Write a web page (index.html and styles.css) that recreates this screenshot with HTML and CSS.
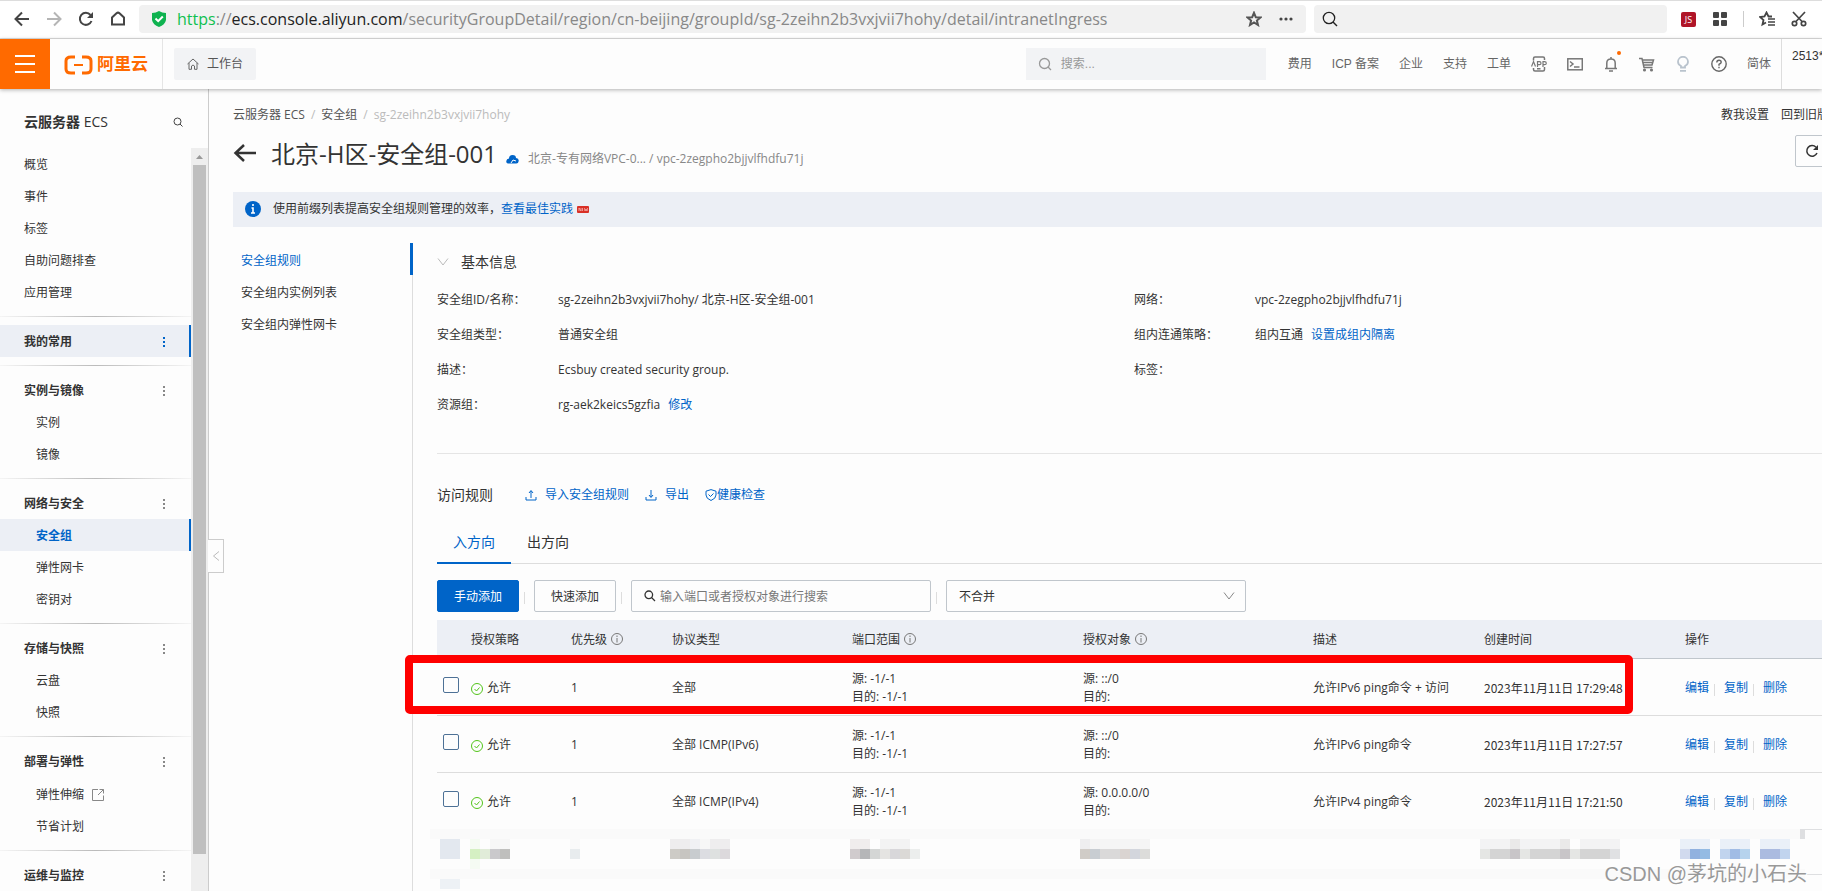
FILE: index.html
```
<!DOCTYPE html>
<html lang="zh-CN">
  <head>
    <meta charset="UTF-8" />
    <meta name="viewport" content="width=device-width, initial-scale=1.0" />
    <title>安全组</title>
    <link rel="stylesheet" href="styles.css">
  </head>
  <body>
    <div class="browser-bar">
      <div class="browser-nav">
        <button type="button" aria-label="后退"><svg width="16" height="16" viewBox="0 0 16 16"><path d="M8 1.500L1.500 8L8 14.500M1.500 8H15" stroke="#444" stroke-width="2" fill="none"/></svg></button>
        <button type="button" aria-label="前进"><svg width="16" height="16" viewBox="0 0 16 16"><path d="M8 1.500L14.500 8L8 14.500M14.500 8H1" stroke="#b5b5b5" stroke-width="2" fill="none"/></svg></button>
        <button type="button" aria-label="刷新"><svg width="16" height="16" viewBox="0 0 16 16"><path d="M13.500 10A6 6 0 1 1 12.500 4" stroke="#444" stroke-width="2" fill="none"/><path d="M15 1V7H9z" fill="#444"/></svg></button>
        <button type="button" aria-label="主页"><svg width="16" height="16" viewBox="0 0 16 16"><path d="M2 13.500V6.500L6.500 2.300Q8 1 9.500 2.300L14 6.500V13.500H15M1 13.500H14" stroke="#444" stroke-width="2" fill="none"/></svg></button>
      </div>
      <div class="address">
        <svg width="16" height="18" viewBox="0 0 16 18"><path d="M8 1Q11 3 15 3V10Q14 15 8 17Q2 15 1 10V3Q5 3 8 1z" fill="#0fb350"/><path d="M4.500 8.500L7.200 11.200L11.800 6.500" stroke="#fff" stroke-width="2" fill="none"/></svg>
        <div class="url"><span class="url-scheme">https</span>://<span class="url-host">ecs.console.aliyun.com</span>/securityGroupDetail/region/cn-beijing/groupId/sg-2zeihn2b3vxjvii7hohy/detail/intranetIngress</div>
        <button type="button" aria-label="收藏"><svg width="16" height="16" viewBox="0 0 16 16"><path d="M8 1.800L9.800 6.200L14.500 6.500L10.900 9.500L12 14L8 11.500L4 14L5.100 9.500L1.500 6.500L6.200 6.200z" stroke="#555" stroke-width="2" fill="none"/></svg></button>
        <button type="button" aria-label="更多"><svg width="16" height="16" viewBox="0 0 16 16" fill="#444"><circle cx="3" cy="8" r="1.600"/><circle cx="8" cy="8" r="1.600"/><circle cx="13" cy="8" r="1.600"/></svg></button>
      </div>
      <label class="browser-search">
        <svg width="16" height="16" viewBox="0 0 16 16"><circle cx="7" cy="7" r="5.700" stroke="#222" stroke-width="1.300" fill="none"/><path d="M11 11L15 15" stroke="#222" stroke-width="1.500"/></svg>
        <input type="text" aria-label="网页搜索">
      </label>
      <div class="browser-tools">
        <span class="js-badge">JS</span>
        <svg width="16" height="16" viewBox="0 0 16 16" fill="#444"><rect x="1" y="1" width="6" height="6" rx="1"/><rect x="9" y="1" width="6" height="6" rx="1"/><rect x="1" y="9" width="6" height="6" rx="1"/><rect x="9" y="9" width="6" height="6" rx="1"/></svg>
        <span class="tool-line"></span>
        <svg width="16" height="16" viewBox="0 0 16 16" fill="none" stroke="#444"><path d="M13 5.500L9.500 5.500L7.500 1.500L5.500 5.500L1 6L4.500 9L3.500 13.500L7 11.500" stroke-width="1.800"/><path d="M9 8H16M9 11H16M9 14H16" stroke-width="1.600"/></svg>
        <svg width="16" height="16" viewBox="0 0 16 16" fill="none" stroke="#444" stroke-width="1.700"><path d="M2 1L11 10.500M14 1L5 10.500"/><circle cx="3.500" cy="12.500" r="2.200"/><circle cx="12.500" cy="12.500" r="2.200"/></svg>
      </div>
    </div>

    <header class="topbar">
      <button type="button" class="menu-btn" aria-label="菜单"><svg width="20" height="20" viewBox="0 0 20 20"><path d="M0 2H20M0 10H20M0 18H20" stroke="#fff" stroke-width="2"/></svg></button>
      <a href="#" class="logo">
        <svg width="29" height="20" viewBox="0 0 29 20" fill="none" stroke="#ff6a00"><path d="M11 2H7Q2 2 2 6V14Q2 18 7 18H11M18 2H22Q27 2 27 6V14Q27 18 22 18H18" stroke-width="3"/><path d="M10 10H19" stroke-width="2"/></svg>
        <span>阿里云</span>
      </a>
      <a href="#" class="workbench">
        <svg width="12" height="12" viewBox="0 0 12 12" fill="none" stroke="#666"><path d="M0.500 6L6 1L11.500 6M2 5V11.300H4.500V8Q6 6 7.500 8V11.300H10V5"/></svg>
        工作台
      </a>
      <label class="top-search">
        <svg width="14" height="14" viewBox="0 0 14 14" fill="none" stroke="#999" stroke-width="1.300"><circle cx="6.500" cy="6.500" r="5"/><path d="M10 10L13 13"/></svg>
        <input type="text" placeholder="搜索..." aria-label="搜索">
      </label>
      <nav class="top-nav">
        <a href="#">费用</a>
        <a href="#">ICP 备案</a>
        <a href="#">企业</a>
        <a href="#">支持</a>
        <a href="#">工单</a>
        <a href="#" aria-label="App"><svg width="16" height="16" viewBox="0 0 16 16" fill="none" stroke="#777" stroke-width="1.500"><path d="M2.500 4.500V2.500Q2.500 1 4 1H12Q13.500 1 13.500 2.500V4M2.500 12V13.500Q2.500 15 4 15H12Q13.500 15 13.500 13.500V11M6 12.800H9.500"/><path d="M0.500 10.500L2.500 5.500L4.500 10.500M6.500 11V5.700H8.500Q10 5.700 10 7.200T8.500 8.700H6.500M12 11V5.700H13.500Q15.300 5.700 15.300 7.200T13.500 8.700H12" stroke-width="1.200"/></svg></a>
        <a href="#" aria-label="终端"><svg width="16" height="16" viewBox="0 0 16 16" fill="none" stroke="#777" stroke-width="1.500"><rect x="0.800" y="2.800" width="14.500" height="11"/><path d="M3 5.500L6 8L3 10.500M7 11H12.500"/></svg></a>
        <a href="#" class="bell" aria-label="消息"><svg width="16" height="16" viewBox="0 0 16 16" fill="none" stroke="#777" stroke-width="1.500"><path d="M2 12.500H14M3.800 12V7Q3.800 3 8 3T12.200 7V12M8 1V3M6 15H10"/></svg><i></i></a>
        <a href="#" aria-label="购物车"><svg width="16" height="16" viewBox="0 0 16 16" fill="none" stroke="#777" stroke-width="1.500"><path d="M0 2.500H3L5 11.500H13.500M3.500 4H14.500L13 9H4.500M4.500 6.500H13.500"/><circle cx="5.500" cy="14" r="0.800"/><circle cx="12.500" cy="14" r="0.800"/></svg></a>
        <a href="#" aria-label="提示"><svg width="16" height="16" viewBox="0 0 16 16" fill="none" stroke="#b9c3cd" stroke-width="1.800"><path d="M6 11.500V10Q3 8.500 3 5.800A5 5 0 0 1 13 5.800Q13 8.500 10 10V11.500zM5 14.800H11"/></svg></a>
        <a href="#" aria-label="帮助"><svg width="16" height="16" viewBox="0 0 16 16" fill="none" stroke="#666" stroke-width="1.400"><circle cx="8" cy="8" r="7.200"/><path d="M5.800 6.500Q5.800 4.300 8 4.300T10.200 6.300Q10.200 7.300 8 8.300V9.700M8 10.800V12.300"/></svg></a>
        <a href="#">简体</a>
      </nav>
      <div class="account">2513*</div>
    </header>

    <div class="layout">
      <aside class="sidebar">
        <div class="sidebar-title">
          <span><strong>云服务器</strong> ECS</span>
          <svg width="10" height="10" viewBox="0 0 10 10" fill="none" stroke="#444"><circle cx="4.500" cy="4.500" r="3.500"/><path d="M7 7L9.500 9.500"/></svg>
        </div>
        <div class="sidebar-body">
          <nav class="menu">
            <a href="#">概览</a>
            <a href="#">事件</a>
            <a href="#">标签</a>
            <a href="#">自助问题排查</a>
            <a href="#">应用管理</a>
            <hr>
            <a href="#" class="group active">我的常用<i class="dots"></i></a>
            <hr>
            <a href="#" class="group">实例与镜像<i class="dots"></i></a>
            <a href="#" class="sub">实例</a>
            <a href="#" class="sub">镜像</a>
            <hr>
            <a href="#" class="group">网络与安全<i class="dots"></i></a>
            <a href="#" class="sub active current">安全组</a>
            <a href="#" class="sub">弹性网卡</a>
            <a href="#" class="sub">密钥对</a>
            <hr>
            <a href="#" class="group">存储与快照<i class="dots"></i></a>
            <a href="#" class="sub">云盘</a>
            <a href="#" class="sub">快照</a>
            <hr>
            <a href="#" class="group">部署与弹性<i class="dots"></i></a>
            <a href="#" class="sub external">弹性伸缩<svg width="12" height="12" viewBox="0 0 12 12" fill="none" stroke="#888"><path d="M6 0.500H0.500V11.500H11.500V6.500M7.500 0.500H11.500V4.500M11.500 0.500L6 6"/></svg></a>
            <a href="#" class="sub">节省计划</a>
            <hr>
            <a href="#" class="group">运维与监控<i class="dots"></i></a>
          </nav>
          <div class="scrollbar">
            <svg width="17" height="17" viewBox="0 0 17 17"><path d="M5 11L8.500 7L12 11z" fill="#999"/></svg>
            <div class="thumb"></div>
          </div>
        </div>
        <button type="button" class="collapse" aria-label="收起"><svg width="8" height="12" viewBox="0 0 8 12"><path d="M7 1.500L1.500 6L7 10.500" stroke="#bbb" fill="none"/></svg></button>
      </aside>

      <main class="main">
        <div class="crumb-row">
          <div class="crumbs"><a href="#">云服务器 ECS</a><i>/</i><a href="#">安全组</a><i>/</i><span>sg-2zeihn2b3vxjvii7hohy</span></div>
          <div class="crumb-links"><a href="#">教我设置</a><a href="#">回到旧版</a></div>
        </div>
        <div class="title-row">
          <a href="#" class="back" aria-label="返回"><svg width="24" height="20" viewBox="0 0 24 20"><path d="M11 2L2.500 10L11 18M2.500 10H23" stroke="#333" stroke-width="2.500" fill="none"/></svg></a>
          <h1>北京-H区-安全组-001</h1>
          <svg width="13" height="10" viewBox="0 0 13 10"><path d="M3 9.500Q0 9.500 0.300 7T3 4.500Q3 1 6.500 1T10 4Q13 4.300 12.700 7T10 9.500z" fill="#0064c8"/><path d="M5 9L7 6L10 7" stroke="#fff" fill="none"/></svg>
          <span class="vpc">北京-专有网络VPC-0... / vpc-2zegpho2bjjvlfhdfu71j</span>
          <button type="button" class="refresh" aria-label="刷新"><svg width="14" height="14" viewBox="0 0 14 14"><path d="M12 9A5.300 5.300 0 1 1 11 3.300" stroke="#333" stroke-width="1.500" fill="none"/><path d="M13 1V6H8z" fill="#333"/></svg></button>
        </div>
        <div class="notice">
          <svg width="16" height="16" viewBox="0 0 16 16"><circle cx="8" cy="8" r="8" fill="#0064c8"/><path d="M8 3V5M6.500 7H8V12M6 12H10" stroke="#fff" stroke-width="1.600" fill="none"/></svg>
          <span>使用前缀列表提高安全组规则管理的效率，<a href="#">查看最佳实践</a></span>
          <svg width="12" height="7" viewBox="0 0 12 7"><rect width="12" height="7" rx="1" fill="#d93026"/><path d="M2 5V2L4 5V2M5.500 2V5M7.500 2L8 5L9 3L10 5L10.500 2" stroke="#f6c6c2" stroke-width="0.700" fill="none"/></svg>
        </div>

        <div class="detail">
          <nav class="subnav">
            <a href="#" class="selected">安全组规则</a>
            <a href="#">安全组内实例列表</a>
            <a href="#">安全组内弹性网卡</a>
          </nav>
          <section class="panel">
            <h2 class="info-title"><svg width="12" height="12" viewBox="0 0 12 12"><path d="M1 2.500L6 9L11 2.500" stroke="#bbb" fill="none"/></svg>基本信息</h2>
            <dl class="info">
              <div><dt>安全组ID/名称：</dt><dd>sg-2zeihn2b3vxjvii7hohy/ 北京-H区-安全组-001</dd></div>
              <div><dt>网络：</dt><dd>vpc-2zegpho2bjjvlfhdfu71j</dd></div>
              <div><dt>安全组类型：</dt><dd>普通安全组</dd></div>
              <div><dt>组内连通策略：</dt><dd>组内互通<a href="#">设置成组内隔离</a></dd></div>
              <div><dt>描述：</dt><dd>Ecsbuy created security group.</dd></div>
              <div><dt>标签：</dt><dd></dd></div>
              <div><dt>资源组：</dt><dd>rg-aek2keics5gzfia<a href="#">修改</a></dd></div>
            </dl>

            <div class="rules-head">
              <h2>访问规则</h2>
              <a href="#"><svg width="12" height="12" viewBox="0 0 12 12" fill="none" stroke="#0064c8"><path d="M1 8V11H11V8M6 9V2M4 4L6 1.500L8 4"/></svg>导入安全组规则</a>
              <a href="#"><svg width="12" height="12" viewBox="0 0 12 12" fill="none" stroke="#0064c8"><path d="M1 8V11H11V8M6 1V8M4 6L6 8.500L8 6"/></svg>导出</a>
              <a href="#" class="health"><svg width="12" height="12" viewBox="0 0 12 12" fill="none" stroke="#0064c8"><path d="M6 0.600L11 2.200V6Q11 9.500 6 11.500Q1 9.500 1 6V2.200zM3.500 5.500L5.500 7.500L8.500 4.500"/></svg>健康检查</a>
            </div>

            <div class="tabs" role="tablist">
              <button type="button" role="tab" class="on">入方向</button>
              <button type="button" role="tab">出方向</button>
            </div>

            <div class="toolbar">
              <button type="button" class="btn primary">手动添加</button>
              <i></i>
              <button type="button" class="btn">快速添加</button>
              <i></i>
              <label class="rule-search">
                <svg width="12" height="12" viewBox="0 0 12 12" fill="none" stroke="#333" stroke-width="1.300"><circle cx="4.800" cy="4.800" r="3.800"/><path d="M7.500 7.500L11 11"/></svg>
                <input type="text" placeholder="输入端口或者授权对象进行搜索" aria-label="搜索规则">
              </label>
              <i></i>
              <div class="select-box">
                <select aria-label="合并方式"><option>不合并</option></select>
                <svg width="12" height="12" viewBox="0 0 12 12"><path d="M1 2.500L6 9L11 2.500" stroke="#888" fill="none"/></svg>
              </div>
            </div>

            <div class="rules">
              <table class="rules-table">
                <colgroup>
                  <col class="c-check"><col class="c-policy"><col class="c-priority"><col class="c-proto"><col class="c-port"><col class="c-target"><col class="c-desc"><col class="c-time"><col>
                </colgroup>
                <thead>
                  <tr>
                    <th></th>
                    <th>授权策略</th>
                    <th>优先级<svg class="tip" width="12" height="12" viewBox="0 0 12 12"><circle cx="6" cy="6" r="5.500" fill="none" stroke="#777"/><path d="M6 2.500V4M6 5V9.500" stroke="#777"/></svg></th>
                    <th>协议类型</th>
                    <th>端口范围<svg class="tip" width="12" height="12" viewBox="0 0 12 12"><circle cx="6" cy="6" r="5.500" fill="none" stroke="#777"/><path d="M6 2.500V4M6 5V9.500" stroke="#777"/></svg></th>
                    <th>授权对象<svg class="tip" width="12" height="12" viewBox="0 0 12 12"><circle cx="6" cy="6" r="5.500" fill="none" stroke="#777"/><path d="M6 2.500V4M6 5V9.500" stroke="#777"/></svg></th>
                    <th>描述</th>
                    <th>创建时间</th>
                    <th>操作</th>
                  </tr>
                </thead>
                <tbody>
                  <tr>
                    <td><input type="checkbox" aria-label="选择规则 1"></td>
                    <td><svg class="ok" width="12" height="12" viewBox="0 0 12 12" fill="none" stroke="#52c41a"><circle cx="6" cy="6" r="5.500"/><path d="M3.500 6L5.500 8L8.500 4.500"/></svg>允许</td>
                    <td>1</td>
                    <td>全部</td>
                    <td>源: -1/-1<br>目的: -1/-1</td>
                    <td>源: ::/0<br>目的:</td>
                    <td>允许IPv6 ping命令 + 访问</td>
                    <td class="time">2023年11月11日 17:29:48</td>
                    <td class="ops"><a href="#">编辑</a><a href="#">复制</a><a href="#">删除</a></td>
                  </tr>
                  <tr>
                    <td><input type="checkbox" aria-label="选择规则 2"></td>
                    <td><svg class="ok" width="12" height="12" viewBox="0 0 12 12" fill="none" stroke="#52c41a"><circle cx="6" cy="6" r="5.500"/><path d="M3.500 6L5.500 8L8.500 4.500"/></svg>允许</td>
                    <td>1</td>
                    <td>全部 ICMP(IPv6)</td>
                    <td>源: -1/-1<br>目的: -1/-1</td>
                    <td>源: ::/0<br>目的:</td>
                    <td>允许IPv6 ping命令</td>
                    <td class="time">2023年11月11日 17:27:57</td>
                    <td class="ops"><a href="#">编辑</a><a href="#">复制</a><a href="#">删除</a></td>
                  </tr>
                  <tr>
                    <td><input type="checkbox" aria-label="选择规则 3"></td>
                    <td><svg class="ok" width="12" height="12" viewBox="0 0 12 12" fill="none" stroke="#52c41a"><circle cx="6" cy="6" r="5.500"/><path d="M3.500 6L5.500 8L8.500 4.500"/></svg>允许</td>
                    <td>1</td>
                    <td>全部 ICMP(IPv4)</td>
                    <td>源: -1/-1<br>目的: -1/-1</td>
                    <td>源: 0.0.0.0/0<br>目的:</td>
                    <td>允许IPv4 ping命令</td>
                    <td class="time">2023年11月11日 17:21:50</td>
                    <td class="ops"><a href="#">编辑</a><a href="#">复制</a><a href="#">删除</a></td>
                  </tr>
                </tbody>
              </table>
              <!-- masked rows -->
              <svg class="mosaic" width="1400" height="62" viewBox="0 0 1400 62" shape-rendering="crispEdges">
                <path d="M0 0H1370V10H0zM0 40H1375V50H0z" fill="#fafafa"/>
                <path d="M1370 0H1375V10H1370zM1375 0H1400V1H1375zM1375 45H1400V46H1375z" fill="#dedfe1"/>
                <path d="M10 10H20V30H10zM20 10H30V30H20z" fill="#e3e8ef"/>
                <path d="M10 50H30V60H10z" fill="#edf1f5"/>
                <path d="M40 10H50V20H40zM40 30H50V40H40z" fill="#f5fbf3"/><path d="M40 20H50V30H40z" fill="#d5f0c3"/><path d="M50 20H60V30H50z" fill="#e1ecd9"/>
                <path d="M60 10H80V20H60z" fill="#f7f7f7"/><path d="M60 20H70V30H60z" fill="#cac9cc"/><path d="M70 20H80V30H70z" fill="#bfbfbd"/>
                <path d="M140 10H150V20H140z" fill="#fafafa"/><path d="M140 20H150V30H140z" fill="#e8ecee"/>
                <path d="M240 10H260V20H240zM280 10H300V20H280z" fill="#eeedee"/><path d="M260 10H270V20H260z" fill="#f0f1f4"/><path d="M270 10H280V20H270z" fill="#f7f7f7"/>
                <path d="M240 20H250V30H240z" fill="#cdcbc6"/><path d="M250 20H260V30H250z" fill="#c7c5c1"/><path d="M260 20H270V30H260z" fill="#c8cccf"/><path d="M270 20H280V30H270z" fill="#dcdde2"/><path d="M280 20H290V30H280z" fill="#dee1e0"/><path d="M290 20H300V30H290z" fill="#dcd9dc"/>
                <path d="M420 10H440V20H420z" fill="#f0eded"/><path d="M450 10H480V20H450z" fill="#f3f3f3"/>
                <path d="M420 20H430V30H420z" fill="#d0cbcd"/><path d="M430 20H440V30H430z" fill="#b5b6b8"/><path d="M440 20H450V30H440z" fill="#d4d6d5"/><path d="M450 20H460V30H450z" fill="#e5e4e2"/><path d="M460 20H470V30H460z" fill="#d8d7da"/><path d="M470 20H480V30H470z" fill="#dbd9d6"/><path d="M480 20H490V30H480z" fill="#eceeed"/>
                <path d="M650 10H660V20H650z" fill="#eeeeef"/><path d="M660 10H720V20H660z" fill="#f5f5f5"/>
                <path d="M650 20H660V30H650z" fill="#d0ccc7"/><path d="M660 20H670V30H660z" fill="#c8cdd2"/><path d="M670 20H690V30H670z" fill="#dad9d9"/><path d="M690 20H700V30H690z" fill="#dad4d1"/><path d="M700 20H710V30H700z" fill="#d3d6dd"/><path d="M710 20H720V30H710z" fill="#dcdcda"/>
                <path d="M1050 10H1080V20H1050zM1090 10H1130V20H1090zM1150 10H1190V20H1150z" fill="#f3f3f4"/><path d="M1080 10H1090V20H1080zM1130 10H1140V20H1130z" fill="#eae9e9"/>
                <path d="M1050 20H1060V30H1050zM1090 20H1100V30H1090zM1140 20H1150V30H1140z" fill="#e5e6e4"/><path d="M1060 20H1080V30H1060zM1100 20H1130V30H1100zM1150 20H1180V30H1150z" fill="#d4d4d4"/><path d="M1080 20H1090V30H1080zM1130 20H1140V30H1130z" fill="#c8c5c8"/><path d="M1180 20H1190V30H1180z" fill="#e0e1e3"/>
                <path d="M1250 10H1280V20H1250zM1290 10H1320V20H1290zM1330 10H1360V20H1330z" fill="#eaf0f8"/>
                <path d="M1250 20H1260V30H1250z" fill="#d1daee"/><path d="M1260 20H1270V30H1260z" fill="#91b1df"/><path d="M1270 20H1280V30H1270z" fill="#94bbe3"/>
                <path d="M1290 20H1300V30H1290zM1350 20H1360V30H1350z" fill="#c1d4ee"/><path d="M1300 20H1310V30H1300z" fill="#a1bce5"/><path d="M1310 20H1320V30H1310z" fill="#b6d3ed"/><path d="M1330 20H1350V30H1330z" fill="#abbbe0"/>
              </svg>
              <div class="highlight"></div>
            </div>
          </section>
        </div>
      </main>
    </div>
    <div class="watermark">CSDN @茅坑的小石头</div>
  </body>
</html>
```
FILE: styles.css
```
* {
  box-sizing: border-box;
}

body {
  display: flex;
  flex-direction: column;
  height: 100vh;
  margin: 0;
  overflow: hidden;
  background-color: #fdfdfd;
  color: #333;
  font: 12px/18px "Open Sans", "Noto Sans CJK SC", sans-serif;
}

a {
  color: #0064c8;
  text-decoration: none;
}

button,
input,
select {
  padding: 0;
  border: 0;
  outline: 0;
  background: none;
  color: inherit;
  font: inherit;
}

svg {
  flex: none;
  display: block;
}

h1,
h2,
dl,
dd {
  margin: 0;
  font-weight: normal;
}

h2 {
  font-size: 14px;
}

/* browser */
.browser-bar {
  display: flex;
  align-items: center;
  height: 39px;
  padding: 0 15px 1px 14px;
  border-top: 1px solid #ddd;
  border-bottom: 1px solid #ddd;
  background-color: #fff;
}

.browser-nav {
  display: flex;
  gap: 16px;
  margin-right: 13px;
}

.address {
  display: flex;
  flex: 1;
  align-items: center;
  gap: 16px;
  height: 28px;
  padding: 0 12px;
  border-radius: 4px;
  background-color: #f1f1f1;
}

.url {
  flex: 1;
  margin-left: -6px;
  overflow: hidden;
  color: #888;
  font-size: 16px;
  line-height: 24px;
  white-space: nowrap;
}

.url-scheme {
  color: #0fc04f;
}

.url-host {
  color: #222;
}

.browser-search {
  display: flex;
  align-items: center;
  width: 353px;
  height: 28px;
  margin-left: 8px;
  padding-left: 8px;
  border-radius: 4px;
  background-color: #f1f1f1;
}

.browser-tools {
  display: flex;
  align-items: center;
  gap: 16px;
  margin-left: 14px;
}

.js-badge {
  width: 15px;
  border-radius: 2px;
  background-color: #b01528;
  color: #fff;
  font-size: 9px;
  line-height: 15px;
  text-align: center;
}

.tool-line {
  width: 1px;
  height: 16px;
  margin: 0 -1px;
  background-color: #ccc;
}

/* console header */
.topbar {
  position: relative;
  z-index: 2;
  display: flex;
  align-items: center;
  height: 50px;
  box-shadow: 0 1px 4px rgba(0, 0, 0, 0.3);
  background-color: #fdfdfd;
  font-family: "Liberation Sans", "Noto Sans CJK SC", sans-serif;
}

.menu-btn {
  display: flex;
  align-items: center;
  justify-content: center;
  width: 50px;
  height: 50px;
  background-color: #ff6a00;
}

.logo {
  display: flex;
  align-items: center;
  gap: 4px;
  height: 50px;
  padding: 2px 14px 0 14px;
  border-right: 1px solid #e5e5e5;
  color: #ff6a00;
  font-size: 17px;
  font-weight: bold;
}

.workbench {
  display: flex;
  align-items: center;
  gap: 8px;
  height: 32px;
  margin-left: 11px;
  padding: 0 13px;
  border-radius: 2px;
  background-color: #f2f3f5;
  color: #555;
}

.top-search {
  display: flex;
  align-items: center;
  gap: 9px;
  width: 240px;
  height: 32px;
  margin-left: auto;
  padding: 0 12px;
  background-color: #f2f3f5;
}

.top-search input,
.rule-search input {
  flex: 1;
  min-width: 0;
}

.top-search input::placeholder {
  color: #999;
}

.top-nav {
  display: flex;
  align-items: center;
  gap: 20px;
  padding: 0 10px 0 22px;
}

.top-nav a {
  color: #666;
}

.bell {
  position: relative;
}

.bell i {
  position: absolute;
  top: -5px;
  right: -2px;
  width: 4px;
  height: 4px;
  border-radius: 50%;
  background-color: #ff6a00;
}

.account {
  width: 41px;
  height: 50px;
  padding: 8px 0 0 10px;
  overflow: hidden;
  border-left: 1px solid #ddd;
}

/* sidebar */
.layout {
  display: flex;
  flex: 1;
  min-height: 0;
}

.sidebar {
  position: relative;
  z-index: 1;
  display: flex;
  flex: none;
  flex-direction: column;
  width: 209px;
  border-right: 1px solid #ccc;
}

.sidebar-title {
  display: flex;
  align-items: center;
  justify-content: space-between;
  flex: none;
  height: 59px;
  padding: 7px 25px 0 24px;
  font-size: 14px;
}

.sidebar-body {
  display: flex;
  flex: 1;
  min-height: 0;
}

.menu {
  flex: 1;
  overflow: hidden;
}

.menu a {
  display: flex;
  align-items: center;
  height: 32px;
  padding: 2px 0 0 24px;
  color: #333;
}

.menu a.sub {
  padding-left: 36px;
}

.menu a.external {
  height: 33px;
}

.menu a.sub svg {
  margin-left: 8px;
}

.menu a.group {
  justify-content: space-between;
  padding-right: 26px;
  font-weight: bold;
}

.menu a.active {
  border-right: 2px solid #0064c8;
  background-color: #eceff5;
}

.menu a.group.active {
  padding-right: 24px;
}

.menu a.current {
  color: #0064c8;
  font-weight: bold;
}

.menu hr {
  height: 1px;
  margin: 8px 0;
  border: 0;
  background: linear-gradient(90deg, #f5f5f5, #bbb, #f5f5f5);
}

.dots {
  width: 2px;
  height: 10px;
  background: repeating-linear-gradient(#888 0 2px, transparent 2px 4px);
}

.active .dots {
  background: repeating-linear-gradient(#0064c8 0 2px, transparent 2px 4px);
}

.scrollbar {
  display: flex;
  flex-direction: column;
  width: 17px;
  padding-bottom: 37px;
  background-color: #eee;
}

.thumb {
  flex: 1;
  margin: 0 2px;
  background-color: #bfbfbf;
}

.collapse {
  position: absolute;
  top: 450px;
  left: 208px;
  display: flex;
  align-items: center;
  justify-content: center;
  width: 16px;
  height: 34px;
  border: 1px solid #ccc;
  border-left: 0;
  background-color: #fdfdfd;
}

/* content */
.main {
  display: flex;
  flex: 1;
  flex-direction: column;
  min-width: 0;
  padding: 17px 0 0 24px;
  overflow: hidden;
}

.crumb-row {
  display: flex;
  justify-content: space-between;
}

.crumbs {
  color: #bbb;
}

.crumbs a {
  color: #555;
}

.crumbs i {
  margin: 0 6px;
  font-style: normal;
}

.crumb-links {
  display: flex;
  gap: 12px;
  margin-right: -7px;
}

.crumb-links a {
  color: #333;
}

.title-row {
  display: flex;
  align-items: center;
  gap: 9px;
  height: 36px;
  margin: 11px 0 21px;
}

.title-row h1 {
  margin-left: 5px;
  padding-top: 2px;
  font-size: 24px;
  line-height: 32px;
}

.title-row .vpc {
  color: #888;
}

.title-row > svg,
.title-row > .vpc {
  margin-top: 12px;
}

.refresh {
  display: flex;
  align-items: center;
  align-self: flex-start;
  flex: none;
  width: 34px;
  height: 32px;
  margin: 0 -7px 0 auto;
  padding-left: 9px;
  border: 1px solid #c0c6cc;
  border-radius: 2px;
}

.notice {
  display: flex;
  align-items: center;
  flex: none;
  height: 35px;
  padding-left: 12px;
  background-color: #eceff5;
}

.notice span {
  margin: 0 4px 0 12px;
}

.detail {
  display: flex;
  flex: 1;
  margin-top: 16px;
}

.subnav {
  flex: none;
  width: 180px;
  border-right: 1px solid #ddd;
}

.subnav a {
  display: block;
  height: 32px;
  margin-right: -1px;
  padding-left: 8px;
  color: #333;
  line-height: 35px;
}

.subnav a.selected {
  border-right: 3px solid #0064c8;
  color: #0064c8;
}

.panel {
  flex: 1;
  min-width: 0;
  padding-left: 24px;
}

.info-title {
  display: flex;
  align-items: center;
  gap: 12px;
  height: 39px;
}

.info {
  display: grid;
  grid-template-columns: 697px 1fr;
  grid-auto-rows: 35px;
  padding-bottom: 31px;
  border-bottom: 1px solid #e5e5e5;
}

.info div {
  display: flex;
  align-items: center;
  padding-top: 2px;
}

.info dt {
  width: 121px;
}

.info a {
  margin-left: 8px;
}

.rules-head {
  display: flex;
  align-items: center;
  gap: 16px;
  height: 32px;
  margin: 24px 0 10px;
  padding-top: 2px;
}

.rules-head h2 {
  margin-right: 16px;
}

.rules-head a {
  display: flex;
  align-items: center;
  gap: 8px;
}

.rules-head a.health {
  gap: 0;
}

.tabs {
  display: flex;
  height: 44px;
  border-bottom: 1px solid #ddd;
}

.tabs button {
  height: 44px;
  padding: 2px 16px 0;
  border-bottom: 2px solid transparent;
  font-size: 14px;
}

.tabs .on {
  border-color: #0064c8;
  color: #0064c8;
}

.toolbar {
  display: flex;
  align-items: center;
  margin: 16px 0 8px;
}

.toolbar > i {
  width: 1px;
  height: 12px;
  margin: 4px 9px 0 5px;
  background-color: #ddd;
}

.btn {
  width: 82px;
  height: 32px;
  padding-top: 2px;
  border: 1px solid #c0c6cc;
  border-radius: 2px;
}

.btn.primary {
  border-color: #0064c8;
  background-color: #0064c8;
  color: #fff;
}

.rule-search {
  display: flex;
  align-items: center;
  gap: 4px;
  width: 300px;
  height: 32px;
  padding-left: 12px;
  border: 1px solid #c0c6cc;
  border-radius: 2px;
}

.rule-search input {
  padding-top: 2px;
}

.rule-search input::placeholder {
  color: #777;
}

.select-box {
  position: relative;
  width: 300px;
}

.select-box select {
  width: 100%;
  height: 32px;
  padding: 2px 0 0 12px;
  border: 1px solid #c0c6cc;
  border-radius: 2px;
  appearance: none;
}

.select-box svg {
  position: absolute;
  top: 10px;
  right: 11px;
}

/* rules */
.rules {
  position: relative;
}

.rules-table {
  width: 100%;
  border-collapse: collapse;
  table-layout: fixed;
}

.c-check { width: 26px; }
.c-policy { width: 100px; }
.c-priority { width: 101px; }
.c-proto { width: 180px; }
.c-port { width: 231px; }
.c-target { width: 230px; }
.c-desc { width: 171px; }
.c-time { width: 201px; }

.rules-table th {
  height: 39px;
  padding: 2px 8px 0;
  border-bottom: 1px solid #c0c6cc;
  background-color: #eceff5;
  font-weight: normal;
  text-align: left;
}

.rules-table td {
  height: 57px;
  padding: 2px 8px 0;
  border-bottom: 1px solid #ddd;
  white-space: nowrap;
}

.rules-table tr:last-child td {
  border-color: transparent;
}

.rules-table td:first-child {
  padding: 0 6px 4px;
}

.rules-table input {
  display: block;
  width: 16px;
  height: 16px;
  margin: 0;
  border: 1px solid #4d7196;
  border-radius: 2px;
  appearance: none;
}

.rules-table .time {
  font-family: "Noto Sans CJK SC", sans-serif;
}

.tip,
.ok {
  display: inline-block;
  margin: 0 4px;
  vertical-align: -1px;
}

.ok {
  margin-left: 0;
  vertical-align: -3px;
}

.ops a + a {
  margin-left: 5px;
  padding-left: 10px;
  background: linear-gradient(#ddd, #ddd) no-repeat 0 5px / 1px 12px;
}

.mosaic {
  margin: -1px 0 0 -7px;
}

.highlight {
  position: absolute;
  top: 35px;
  left: -32px;
  width: 1228px;
  height: 59px;
  border: 8px solid #f00;
  border-radius: 5px;
  pointer-events: none;
}

.watermark {
  position: absolute;
  right: 15px;
  bottom: 3px;
  z-index: 3;
  color: #999;
  font-size: 20px;
  font-family: "Liberation Sans", "Noto Sans CJK SC", sans-serif;
  line-height: 28px;
  text-shadow: 1px 1px 0 #fff;
}
```
